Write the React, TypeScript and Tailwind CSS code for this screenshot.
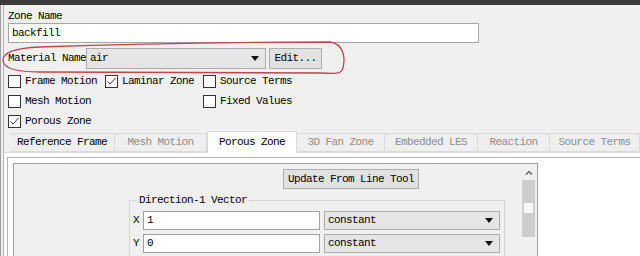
import React from "react";

const Check = ({ checked }: { checked?: boolean }) => (
  <span className="w-[13px] h-[13px] border border-[#333] bg-white flex items-center justify-center shrink-0">
    {checked && (
      <svg width="11" height="11" viewBox="0 0 11 11">
        <polyline points="1.5,5.5 4,8 9.5,2" fill="none" stroke="#333" strokeWidth="1" />
      </svg>
    )}
  </span>
);

const Arrow = () => (
  <svg width="8" height="5" viewBox="0 0 8 5" className="shrink-0">
    <polygon points="0,0 8,0 4,5" fill="#111" />
  </svg>
);

const Combo = ({ value, className }: { value: string; className: string }) => (
  <div className={`flex items-center justify-between bg-[#e5e5e5] border border-[#acacac] pl-[3px] pr-[6px] ${className}`}>
    <span>{value}</span>
    <Arrow />
  </div>
);

const CheckItem = ({ label, checked }: { label: string; checked?: boolean }) => (
  <div className="flex items-start pt-[3px] gap-[4px] h-[20px]">
    <Check checked={checked} />
    <span className="leading-[13px]">{label}</span>
  </div>
);

const tabs = [
  { name: "Reference Frame", w: "w-[105px]", enabled: true },
  { name: "Mesh Motion", w: "w-[92px]" },
  { name: "Porous Zone", w: "w-[90px]", selected: true, enabled: true },
  { name: "3D Fan Zone", w: "w-[88px]" },
  { name: "Embedded LES", w: "w-[93px]" },
  { name: "Reaction", w: "w-[72px]" },
  { name: "Source Terms", w: "w-[90px]" },
];

export default function App() {
  return (
    <div className="relative w-[640px] h-[256px] overflow-hidden bg-[#f0f0f0] text-black font-['Liberation_Mono',monospace] text-[11px] tracking-[-0.6px]">
      <div className="h-[5px] bg-[#3c3c3c]" />
      <div className="flex h-[251px]">
        {/* window edge */}
        <div className="w-[1px] bg-[#9c9c9c]" />
        <div className="w-[2px]" />
        <div className="w-[1px] bg-[#b4b4b4]" />

        <div className="flex-1 flex flex-col min-w-0">
          <div className="pl-[4px]">
            <div className="mt-[4px] h-[14px] leading-[14px]">Zone Name</div>
            <div className="w-[471px] h-[20px] bg-white border border-[#a5a5a5] flex items-center pl-[3px]">backfill</div>

            <div className="mt-[5px] h-[21px] flex items-center">
              <span className="w-[78px]">Material Name</span>
              <Combo value="air" className="w-[180px] h-[21px] ml-[0px]" />
              <div className="ml-[3px] w-[53px] h-[21px] bg-[#e1e1e1] border border-[#adadad] flex items-center justify-center">
                Edit...
              </div>
            </div>

            <div className="mt-[3px] grid grid-cols-[97px_98px_120px]">
              <CheckItem label="Frame Motion" />
              <CheckItem label="Laminar Zone" checked />
              <CheckItem label="Source Terms" />
              <CheckItem label="Mesh Motion" />
              <div />
              <CheckItem label="Fixed Values" />
              <CheckItem label="Porous Zone" checked />
            </div>
          </div>

          {/* tab headers */}
          <div className="mt-[-1px] h-[21px] flex items-end pl-[6px] relative z-10">
            {tabs.map((t) =>
              t.selected ? (
                <div
                  key={t.name}
                  className={`${t.w} h-[22px] mb-[-1px] bg-white border-t border-x border-[#d9d9d9] flex items-center justify-center`}
                >
                  {t.name}
                </div>
              ) : (
                <div
                  key={t.name}
                  className={`${t.w} h-[19px] shrink-0 bg-[#efefef] border-t border-r border-b border-[#d9d9d9] flex items-center justify-center ${
                    t.enabled ? "text-black" : "text-[#8d8d8d]"
                  }`}
                >
                  {t.name}
                </div>
              )
            )}
          </div>

          {/* tab page */}
          <div className="flex-1 bg-white border-t border-[#d9d9d9] pt-[4px] pl-[3px]">
            <div className="h-full border-t border-l border-[#b4b4b4] pl-[5px] pt-[5px]">
              <div className="w-[525px] h-full border border-[#a0a0a0] bg-[#f0f0f0] flex">
                <div className="flex-1 flex flex-col items-start">
                  <div className="ml-[269px] mt-[5px] w-[136px] h-[20px] bg-[#e1e1e1] border border-[#adadad] flex items-center justify-center">
                    Update From Line Tool
                  </div>

                  <fieldset className="ml-[115px] mt-[4px] w-[376px] border border-[#d5d5d5] pb-[6px]">
                    <legend className="ml-[7px] px-[2px] h-[14px] leading-[14px]">Direction-1 Vector</legend>
                    <div className="pt-[4px] flex flex-col gap-[4px]">
                      {["X", "Y"].map((axis, i) => (
                        <div key={axis} className="flex items-center h-[19px]">
                          <span className="w-[13px] pl-[3px]">{axis}</span>
                          <div className="w-[177px] h-[19px] bg-white border border-[#a0a0a0] flex items-center pl-[3px]">
                            {i === 0 ? "1" : "0"}
                          </div>
                          <Combo value="constant" className="ml-[4px] w-[176px] h-[19px]" />
                        </div>
                      ))}
                    </div>
                  </fieldset>
                </div>

                {/* scrollbar */}
                <div className="w-[17px] flex flex-col items-center bg-[#f0f0f0]">
                  <div className="h-[16px] flex items-center justify-center">
                    <svg width="8" height="5" viewBox="0 0 8 5">
                      <polyline points="1,4.5 4,1.5 7,4.5" fill="none" stroke="#555" strokeWidth="1.2" />
                    </svg>
                  </div>
                  <div className="w-[13px] h-[57px] bg-[#cdcdcd] flex justify-center">
                    <div className="mt-[23px] w-[9px] h-[10px] bg-[#f7f7f7]" />
                  </div>
                </div>
              </div>
            </div>
          </div>
        </div>
      </div>

      {/* hand-drawn red annotation */}
      <svg className="absolute inset-0 pointer-events-none" width="640" height="256" viewBox="0 0 640 256">
        <path
          d="M330 42 C345 44 345 60 343 68 C342 74 335 74 320 73 L40 72 C15 72 3 68 3 60 C3 52 15 48 40 47 C120 44 220 42 330 42"
          fill="none"
          stroke="#c4434c"
          strokeWidth="1.3"
        />
      </svg>
    </div>
  );
}
